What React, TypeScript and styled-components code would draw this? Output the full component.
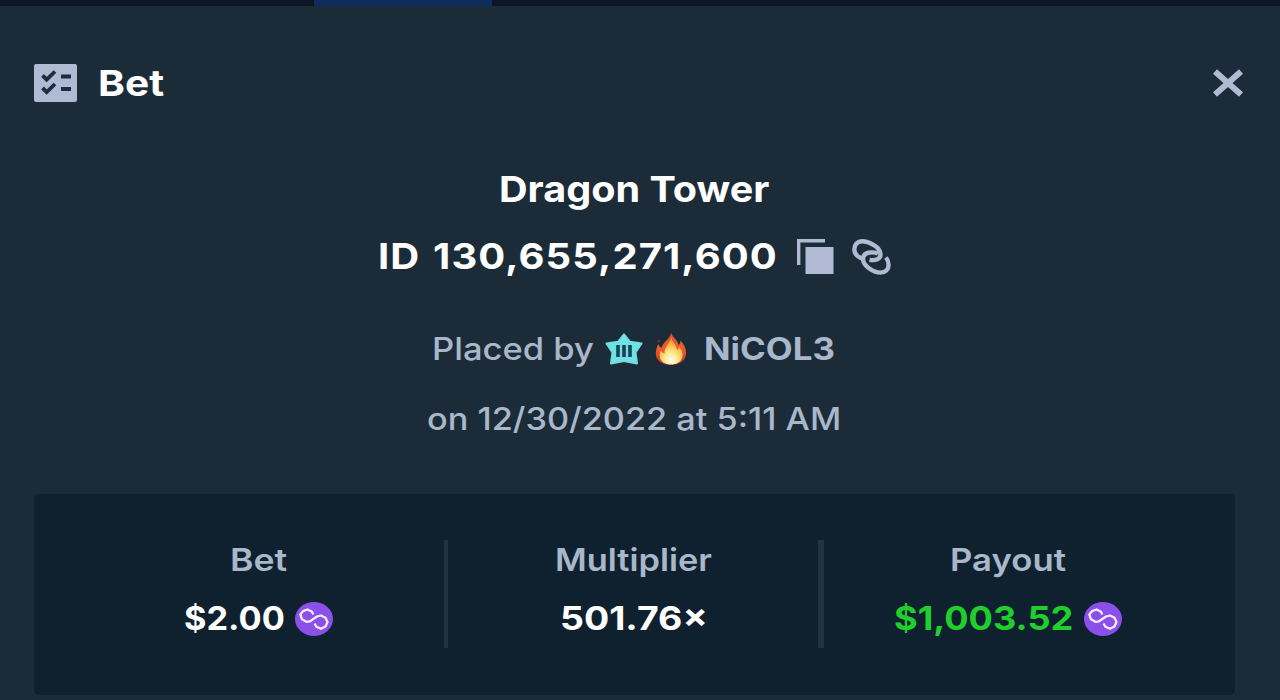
import React from 'react';
import styled, { createGlobalStyle } from 'styled-components';

const colors = {
  page: '#1b2c38',
  nav: '#0c1627',
  navActive: '#0f2d5c',
  card: '#0f212e',
  divider: '#21333f',
  muted: '#b1bad3',
  text: '#a9b7cb',
  white: '#ffffff',
  green: '#1fd02c',
};

const GlobalStyle = createGlobalStyle`
  * { box-sizing: border-box; }
  body {
    margin: 0;
    background: ${colors.page};
    font-family: Inter, 'Open Sans', sans-serif;
    overflow: hidden;
  }
  svg { display: block; flex: none; }
`;

const Modal = styled.main`
  width: 1280px;
  height: 700px;
  display: flex;
  flex-direction: column;
  background: ${colors.page};
  overflow: hidden;
`;

const NavEdge = styled.div`
  height: 6px;
  flex: none;
  padding-left: 314px;
  background: ${colors.nav};
`;

const NavTab = styled.div`
  width: 178px;
  height: 6px;
  background: ${colors.navActive};
`;

const Header = styled.header`
  display: flex;
  align-items: center;
  justify-content: space-between;
  height: 78px;
  margin-top: 38px;
  padding: 0 36px 0 34px;
`;

const HeaderTitle = styled.div`
  display: flex;
  align-items: center;
  gap: 21px;
`;

const CloseButton = styled.button`
  padding: 0;
  border: 0;
  background: none;
  cursor: pointer;
`;

const Content = styled.section`
  display: flex;
  flex-direction: column;
  padding: 35px 45px 0 34px;
`;

const Line = styled.div<{ $height: number; $gap?: number }>`
  display: flex;
  flex: none;
  align-items: center;
  justify-content: center;
  gap: ${p => p.$gap ?? 0}px;
  height: ${p => p.$height}px;
  padding-right: 1px;
`;

/* The face is drawn slightly extended; $width is the final width of the text. */
const Text = styled.span<{
  $size: number;
  $width: number;
  $stretch: number;
  $spacing?: number;
  $weight?: number;
  $color?: string;
}>`
  width: ${p => p.$width}px;
  flex: none;
  font-size: ${p => p.$size}px;
  font-weight: ${p => p.$weight ?? 700};
  letter-spacing: ${p => p.$spacing ?? 0}px;
  line-height: 1.2;
  color: ${p => p.$color ?? colors.white};
  white-space: pre;
  transform: scaleX(${p => p.$stretch});
  transform-origin: left center;
`;

const HeaderText = styled(Text)`
  margin-top: 2px;
`;

const BetId = styled(Text)`
  word-spacing: 2px;
`;

const UserName = styled(Text)`
  margin-left: 5px;
`;

const BetInfo = styled.div`
  display: flex;
  flex-direction: column;
  margin: 23px 0 40px;
`;

const Stats = styled.div`
  display: grid;
  grid-template-columns: repeat(3, 375px);
  justify-content: center;
  align-items: start;
  height: 201px;
  padding: 46px 2px 0 0;
  border-radius: 5px;
  background: ${colors.card};
`;

const Stat = styled.div<{ $rule?: number }>`
  display: flex;
  flex-direction: column;
  height: 108px;
  ${p =>
    p.$rule &&
    `box-shadow: -${p.$rule}px 0 0 ${colors.divider}, inset ${p.$rule}px 0 0 ${colors.divider};`}
`;

const ListIcon = () => (
  <svg width="43" height="38" viewBox="0 0 43 38">
    <rect width="43" height="38" rx="2" fill={colors.muted} />
    <g fill="none" stroke="#1d2d40" strokeWidth="3.8">
      <path d="M8.500 11.500l4.200 4 8.300-8M8.500 24l4.200 4 8.300-8" />
      <path d="M27 12.500h10M27 25h10" />
    </g>
  </svg>
);

const CloseIcon = () => (
  <svg width="32" height="30" viewBox="0 0 32 30">
    <path d="M3 3.5l26 23M29 3.5l-26 23" stroke={colors.muted} strokeWidth="6" />
  </svg>
);

const CopyIcon = () => (
  <svg width="37" height="36" viewBox="0 0 37 36">
    <path d="M1.7 26V1.7H28" fill="none" stroke={colors.muted} strokeWidth="3.4" />
    <rect x="8.5" y="8" width="28" height="27" fill={colors.muted} />
  </svg>
);

const LinkIcon = () => (
  <svg width="39" height="36" viewBox="0 0 39 36">
    <g fill="none" stroke={colors.muted} strokeWidth="4.4" strokeLinejoin="round">
      <path d="M12.500 20C7 19.500 2.300 15.500 2.300 10.500C2.300 5.500 5.500 2.300 10 2.300C16 2.300 28.500 7.500 28.500 15.500C28.500 20 24 22 17.500 20.800" />
      <path d="M26 14.500C20.500 12.500 11 12.700 11 20C11 27 22 33.600 28.500 33.600C33.500 33.600 36.600 30.500 36.600 26C36.600 22.500 35.600 20.500 34 18.500" />
    </g>
  </svg>
);

const StarIcon = () => (
  <svg width="38" height="32" viewBox="0 0 38 32">
    <path
      d="M19 1.500L25 8.800 36.500 10.500 30.500 19.500 32 30.500 19 28 6 30.500 7.500 19.500 1.500 10.500 13 8.800Z"
      fill="#6fe0e3"
      stroke="#6fe0e3"
      strokeWidth="2"
      strokeLinejoin="round"
    />
    <path d="M13 12v12M19 12v12M25 12v12" stroke="#1b4050" strokeWidth="3.600" />
  </svg>
);

const FlameIcon = () => (
  <svg width="32" height="32" viewBox="0 0 32 32">
    <defs>
      <linearGradient id="flame" x1="0" y1="0" x2="0" y2="1">
        <stop offset="0" stopColor="#d9552c" />
        <stop offset=".5" stopColor="#e8602a" />
        <stop offset="1" stopColor="#c9331f" />
      </linearGradient>
      <radialGradient id="core" cx=".5" cy=".85" r=".75">
        <stop offset="0" stopColor="#fffdf0" />
        <stop offset=".4" stopColor="#ffe98c" />
        <stop offset=".75" stopColor="#ffb647" />
        <stop offset="1" stopColor="#f98a2e" />
      </radialGradient>
    </defs>
    <path
      d="M16 0C18 5 23 7 23.500 12C25 11 25.500 9 25.500 7.500C29 11 31.500 16 31 21C30.500 28 24 32 16 32C8 32 1 28 .8 21C.7 17 2 13.500 3.500 11C4 13 5 14 6.500 15C8 8 15 7 16 0Z"
      fill="url(#flame)"
    />
    <circle cx="4" cy="8" r="1.300" fill="#8a2c2a" />
    <path
      d="M16 4C17 9 21.500 11 22 17C23.500 16 24 15 24 13.500C27 17 28.500 21 27 25C25.500 29.500 21 31.500 16 31.500C10.500 31.500 5.500 29 4.800 24C4.400 21 5 19 6 17.500C7 19.500 8 20 9.500 20.500C9 14 15 11 16 4Z"
      fill="url(#core)"
    />
  </svg>
);

const PolygonIcon = () => (
  <svg width="38" height="34" viewBox="0 0 38 34">
    <ellipse cx="19" cy="17" rx="19" ry="17" fill="#8a50ea" />
    <path
      d="M18.300 12.500L17 9.800 12.500 7.500 8 9.200 5.300 12.500 7 17.300 11.500 19.800 15 19.300 22 14.500 26 13.500 30.500 15.800 32.500 20 30.500 24.500 26 26.800 21.500 24.800 19.500 21.500"
      fill="none"
      stroke="#fbeaff"
      strokeWidth="2.300"
      strokeLinejoin="round"
    />
  </svg>
);

const App: React.FC = () => (
  <>
    <GlobalStyle />
    <Modal>
      <NavEdge>
        <NavTab />
      </NavEdge>
      <Header>
        <HeaderTitle>
          <ListIcon />
          <HeaderText $size={36} $width={66} $stretch={1.13}>Bet</HeaderText>
        </HeaderTitle>
        <CloseButton aria-label="Close">
          <CloseIcon />
        </CloseButton>
      </Header>
      <Content>
        <Line $height={66}>
          <Text $size={36} $width={271} $stretch={1.1}>Dragon Tower</Text>
        </Line>
        <Line $height={68} $gap={18}>
          <BetId $size={36} $width={401} $stretch={1.11} $spacing={1}>ID 130,655,271,600</BetId>
          <CopyIcon />
          <LinkIcon />
        </Line>
        <BetInfo>
          <Line $height={70} $gap={12}>
            <Text $size={31} $width={161} $stretch={1.115} $weight={500} $color={colors.text}>Placed by</Text>
            <StarIcon />
            <FlameIcon />
            <UserName $size={31} $width={132} $stretch={1.125} $color={colors.text}>NiCOL3</UserName>
          </Line>
          <Line $height={70}>
            <Text $size={31} $width={414} $stretch={1.105} $weight={500} $color={colors.text}>on 12/30/2022 at 5:11 AM</Text>
          </Line>
        </BetInfo>
        <Stats>
          <Stat>
            <Line $height={40}>
              <Text $size={31} $width={57} $stretch={1.15} $weight={600} $color={colors.text}>Bet</Text>
            </Line>
            <Line $height={78} $gap={11}>
              <Text $size={33} $width={100} $stretch={1.04}>$2.00</Text>
              <PolygonIcon />
            </Line>
          </Stat>
          <Stat $rule={2}>
            <Line $height={40}>
              <Text $size={31} $width={157} $stretch={1.11} $weight={600} $color={colors.text}>Multiplier</Text>
            </Line>
            <Line $height={78}>
              <Text $size={33} $width={147} $stretch={1.135}>501.76×</Text>
            </Line>
          </Stat>
          <Stat $rule={3}>
            <Line $height={40}>
              <Text $size={31} $width={116} $stretch={1.12} $weight={600} $color={colors.text}>Payout</Text>
            </Line>
            <Line $height={78} $gap={11}>
              <Text $size={33} $width={179} $stretch={1.095} $color={colors.green}>$1,003.52</Text>
              <PolygonIcon />
            </Line>
          </Stat>
        </Stats>
      </Content>
    </Modal>
  </>
);

export default App;
